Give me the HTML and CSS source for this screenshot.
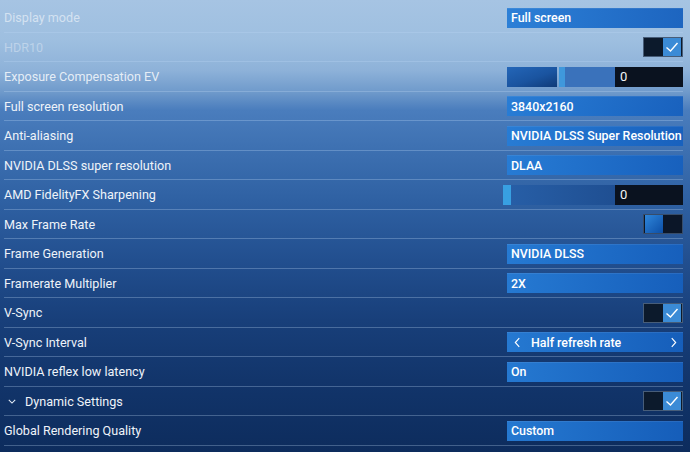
FILE: index.html
```html
<!DOCTYPE html>
<html>
<head>
<meta charset="utf-8">
<link rel="stylesheet" href="styles.css">
</head>
<body>
<div class="list">
  <div class="row"><span class="label dim1">Display mode</span><div class="select">Full screen</div></div>
  <div class="row"><span class="label dim2">HDR10</span><div class="check on"><span class="box"><svg viewBox="0 0 18 18"><polyline points="3.5,9.5 7.5,13 14.5,5"/></svg></span></div></div>
  <div class="row"><span class="label dim3">Exposure Compensation EV</span>
    <div class="slider ev"><span class="fill"></span><span class="thumb"></span><span class="track"></span><span class="num">0</span></div></div>
  <div class="row"><span class="label">Full screen resolution</span><div class="select">3840x2160</div></div>
  <div class="row"><span class="label">Anti-aliasing</span><div class="select">NVIDIA DLSS Super Resolution</div></div>
  <div class="row"><span class="label">NVIDIA DLSS super resolution</span><div class="select">DLAA</div></div>
  <div class="row"><span class="label">AMD FidelityFX Sharpening</span>
    <div class="slider amd"><span class="thumb"></span><span class="track"></span><span class="num">0</span></div></div>
  <div class="row"><span class="label">Max Frame Rate</span><div class="toggle"><span class="knob"></span></div></div>
  <div class="row"><span class="label">Frame Generation</span><div class="select">NVIDIA DLSS</div></div>
  <div class="row"><span class="label">Framerate Multiplier</span><div class="select">2X</div></div>
  <div class="row"><span class="label">V-Sync</span><div class="check on"><span class="box"><svg viewBox="0 0 18 18"><polyline points="3.5,9.5 7.5,13 14.5,5"/></svg></span></div></div>
  <div class="row"><span class="label">V-Sync Interval</span>
    <div class="select stepper"><svg class="chev" viewBox="0 0 8 12"><polyline points="6,1 1.5,6 6,11"/></svg><span class="val">Half refresh rate</span><svg class="chev" viewBox="0 0 8 12"><polyline points="2,1 6.5,6 2,11"/></svg></div></div>
  <div class="row"><span class="label">NVIDIA reflex low latency</span><div class="select">On</div></div>
  <div class="row"><span class="label group"><svg class="down" viewBox="0 0 10 6"><polyline points="1,1 5,5 9,1"/></svg>Dynamic Settings</span><div class="check on"><span class="box"><svg viewBox="0 0 18 18"><polyline points="3.5,9.5 7.5,13 14.5,5"/></svg></span></div></div>
  <div class="row"><span class="label">Global Rendering Quality</span><div class="select">Custom</div></div>
</div>
</body>
</html>
```
FILE: styles.css
```css
html, body {
  margin: 0;
  padding: 0;
}
body {
  width: 690px;
  height: 452px;
  overflow: hidden;
  font-family: Roboto, "Liberation Sans", sans-serif;
  background: linear-gradient(180deg,
    #a6c4e3 0px,
    #9ebfe0 40px,
    #8eb2d9 70px,
    #6f9acb 92px,
    #4a7dbd 110px,
    #3d70b1 150px,
    #2f61a3 200px,
    #224f8f 260px,
    #183f7a 320px,
    #12356b 380px,
    #0d2c5d 452px);
}
.list {
  padding-top: 3px;
  padding-right: 7px;
  padding-left: 4px;
}
.row {
  height: 29.5px;
  box-sizing: border-box;
  display: flex;
  align-items: center;
  justify-content: space-between;
  border-bottom: 1.5px solid rgba(190, 215, 245, 0.3);
  padding-top: 1px;
}
.label {
  color: #eef3f9;
  font-size: 12.6px;
  white-space: nowrap;
}
.label.dim1 { color: rgba(255, 255, 255, 0.55); }
.label.dim2 { color: rgba(255, 255, 255, 0.35); }
.label.dim3 { color: rgba(255, 255, 255, 0.8); }
.group {
  display: flex;
  align-items: center;
}
.down {
  width: 8px;
  height: 5px;
  margin-left: 4px;
  margin-right: 9px;
  fill: none;
  stroke: #e6eef8;
  stroke-width: 1.3;
}
.select {
  width: 176px;
  height: 20px;
  box-sizing: border-box;
  padding-left: 4px;
  display: flex;
  align-items: center;
  color: #ffffff;
  font-size: 12.4px;
  font-weight: 500;
  white-space: nowrap;
  overflow: hidden;
  background: linear-gradient(90deg, rgba(38, 124, 214, 0.95), rgba(22, 96, 190, 0.95));
  box-shadow: inset 0 1px 0 rgba(255, 255, 255, 0.08);
}
.stepper {
  padding-left: 7px;
  padding-right: 6px;
}
.stepper .val {
  flex: 1;
  margin-left: 10px;
}
.chev {
  width: 7px;
  height: 11px;
  fill: none;
  stroke: #ffffff;
  stroke-width: 1.3;
}
.check {
  width: 40px;
  height: 20px;
  box-sizing: border-box;
  background: #0c1a2c;
  border: 1px solid rgba(120, 150, 185, 0.55);
  display: flex;
  justify-content: flex-end;
  align-items: center;
  padding-right: 1px;
}
.check .box {
  width: 18px;
  height: 18px;
  background: #3b8bd6;
  display: flex;
}
.check svg {
  width: 18px;
  height: 18px;
  fill: none;
  stroke: #ffffff;
  stroke-width: 1.4;
}
.toggle {
  width: 40px;
  height: 20px;
  box-sizing: border-box;
  background: #0b1628;
  border: 1px solid rgba(100, 130, 170, 0.5);
  display: flex;
  align-items: center;
  padding-left: 1px;
}
.toggle .knob {
  width: 18px;
  height: 18px;
  background: linear-gradient(135deg, #2f86da, #0c4ea6);
}
.slider {
  display: flex;
  align-items: stretch;
  height: 20px;
}
.slider.ev { width: 176px; }
.slider.amd { width: 180px; }
.ev .fill {
  width: 50px;
  background: linear-gradient(160deg, #2466b8 0%, #1a54a0 55%, #0f3a78 100%);
}
.ev .thumb {
  width: 6px;
  margin-left: 2px;
  background: #3f98dc;
}
.ev .track {
  flex: 1;
  background: #3a72bb;
}
.amd .thumb {
  width: 8px;
  background: #38a0e2;
}
.amd .track {
  flex: 1;
  background: linear-gradient(90deg, #275ea6, #1f4f92);
}
.num {
  width: 68px;
  box-sizing: border-box;
  background: #0a121f;
  color: #f2f5f8;
  font-size: 13px;
  padding-left: 5px;
  display: flex;
  align-items: center;
}
```
